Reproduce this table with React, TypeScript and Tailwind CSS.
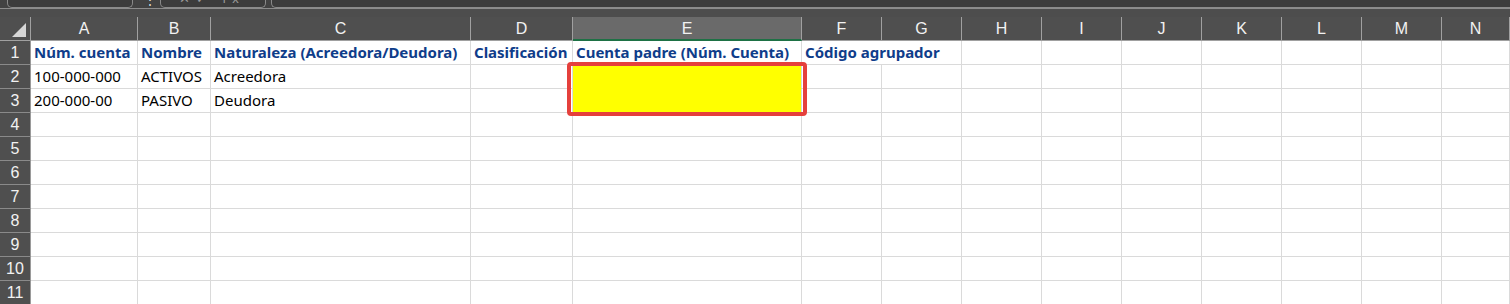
import React from "react";

const COLS = ["A", "B", "C", "D", "E", "F", "G", "H", "I", "J", "K", "L", "M", "N"];

const DATA: Record<number, string[]> = {
  1: ["Núm. cuenta", "Nombre", "Naturaleza (Acreedora/Deudora)", "Clasificación", "Cuenta padre (Núm. Cuenta)", "Código agrupador"],
  2: ["100-000-000", "ACTIVOS", "Acreedora"],
  3: ["200-000-00", "PASIVO", "Deudora"],
};

const ROWS = [1, 2, 3, 4, 5, 6, 7, 8, 9, 10, 11];

const cellFont = { fontFamily: '"Noto Sans", "Open Sans", sans-serif' };
const headFont = { fontFamily: '"Liberation Sans", Arial, sans-serif' };

function Toolbar() {
  return (
    <div className="flex h-[9px] border-b border-[#8c8c8c] bg-[#424242]">
      <div className="ml-[7px] h-[8px] w-[126px] rounded-b-[5px] border-x border-b border-[#8a8a8a] bg-[#3c3c3c]" />
      <div className="relative w-[27px] overflow-hidden">
        <span className="absolute left-[11px] top-[-9px] text-[12px] text-[#e8e8e8]">⋮</span>
      </div>
      <div className="relative h-[8px] w-[106px] overflow-hidden rounded-b-[5px] border-x border-b border-[#8a8a8a] bg-[#3c3c3c]">
        <span className="absolute left-[18px] top-[-11px] text-[13px] tracking-[6px] text-[#9a9a9a]" style={headFont}>
          ✕✓ fx
        </span>
      </div>
      <div className="ml-[5px] h-[8px] flex-1 rounded-bl-[5px] border-b border-l border-[#8a8a8a] bg-[#3c3c3c]" />
    </div>
  );
}

function Cell({ r, c, i }: { r: number; c: string; i: number }) {
  const text = DATA[r]?.[i];
  const yellow = c === "E" && (r === 2 || r === 3);
  let cls =
    "flex items-center whitespace-nowrap border-r border-b pl-[3px] text-[15px] ";
  cls += yellow ? "bg-[#ffff00] border-r-[#dadada] " : "bg-white border-[#dadada] ";
  if (yellow) cls += r === 2 ? "border-b-[#ffff00] " : "border-b-[#dadada] ";
  cls += r === 1 ? "font-bold text-[#0f3d8a]" : "text-black";
  // text of F1 runs over into G, as Excel does
  if (r === 1 && c === "F") cls += " col-span-2";
  return (
    <div className={cls} style={cellFont}>
      {text}
    </div>
  );
}

export default function App() {
  return (
    <div className="h-[304px] w-[1510px] overflow-hidden bg-white">
      <Toolbar />
      <div className="h-[8px] bg-[#4d4d4d]" />
      <div className="relative">
        <div className="grid grid-cols-[31px_107px_73px_260px_102px_229px_80px_80px_80px_80px_80px_80px_80px_80px_1fr] auto-rows-[24px]">
          {/* corner */}
          <div className="relative border-r border-b border-[#a0a0a0] bg-[#4f4f4f]">
            <svg className="absolute bottom-[3px] right-[4px]" width="14" height="14" viewBox="0 0 14 14">
              <path d="M14 0 L14 14 L0 14 Z" fill="#d6d6d6" />
            </svg>
          </div>
          {COLS.map((c) => (
            <div
              key={c}
              className={
                c === "E"
                  ? "flex items-center justify-center border-r border-b-2 border-r-[#a0a0a0] border-b-[#1e7145] bg-[#6a6a6a] pt-[2px] text-[16px] text-[#f2f2f2]"
                  : "flex items-center justify-center border-r border-b border-[#a0a0a0] bg-[#4f4f4f] text-[16px] text-[#f2f2f2]"
              }
              style={headFont}
            >
              {c}
            </div>
          ))}
          {ROWS.map((r) => (
            <React.Fragment key={r}>
              <div
                className="flex items-center justify-center border-r border-b border-r-[#9a9a9a] border-b-[#8a8a8a] bg-[#4f4f4f] text-[16px] text-[#f2f2f2]"
                style={headFont}
              >
                {r}
              </div>
              {COLS.map((c, i) =>
                r === 1 && c === "G" ? null : <Cell key={c} r={r} c={c} i={i} />
              )}
            </React.Fragment>
          ))}
        </div>
        {/* annotation over E2:E3 */}
        <div className="pointer-events-none absolute left-[567px] top-[45px] h-[54px] w-[240px] rounded-[4px] border-[4px] border-[#e5403c]" />
      </div>
    </div>
  );
}
